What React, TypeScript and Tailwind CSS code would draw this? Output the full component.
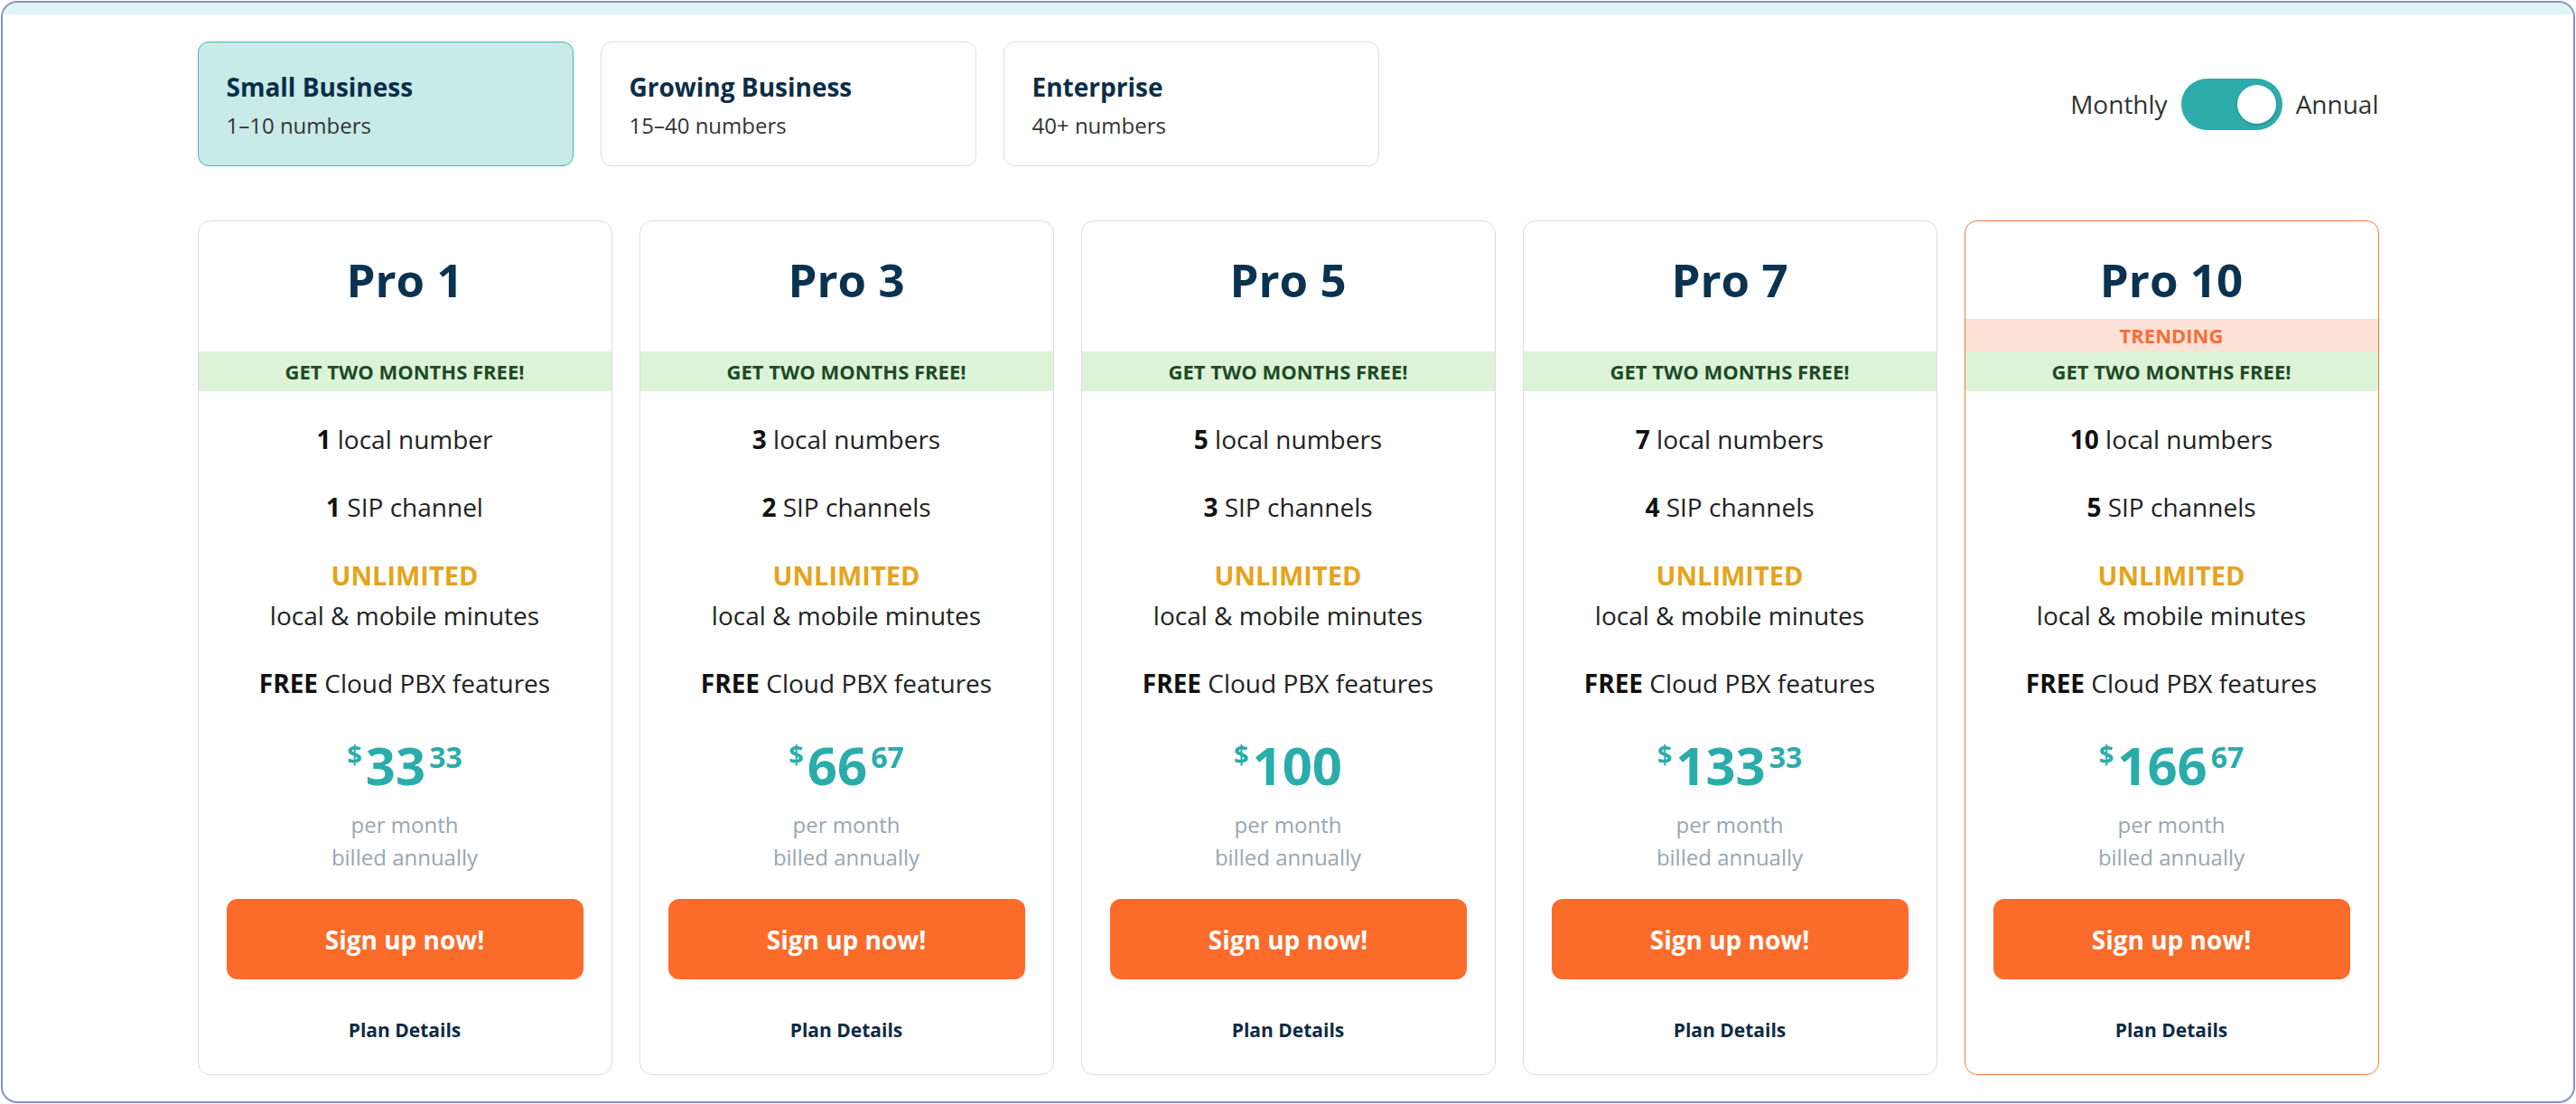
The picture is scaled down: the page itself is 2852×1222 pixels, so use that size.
import React from 'react';

type Plan = {
  name: string;
  numbers: string;
  numberLabel: string;
  channels: string;
  channelLabel: string;
  dollars: string;
  cents?: string;
  trending?: boolean;
};

const plans: Plan[] = [
  { name: 'Pro 1', numbers: '1', numberLabel: 'local number', channels: '1', channelLabel: 'SIP channel', dollars: '33', cents: '33' },
  { name: 'Pro 3', numbers: '3', numberLabel: 'local numbers', channels: '2', channelLabel: 'SIP channels', dollars: '66', cents: '67' },
  { name: 'Pro 5', numbers: '5', numberLabel: 'local numbers', channels: '3', channelLabel: 'SIP channels', dollars: '100' },
  { name: 'Pro 7', numbers: '7', numberLabel: 'local numbers', channels: '4', channelLabel: 'SIP channels', dollars: '133', cents: '33' },
  { name: 'Pro 10', numbers: '10', numberLabel: 'local numbers', channels: '5', channelLabel: 'SIP channels', dollars: '166', cents: '67', trending: true },
];

const tabs = [
  { title: 'Small Business', sub: '1–10 numbers', active: true },
  { title: 'Growing Business', sub: '15–40 numbers' },
  { title: 'Enterprise', sub: '40+ numbers' },
];

function PlanCard({ plan }: { plan: Plan }) {
  return (
    <div
      className={`flex flex-col rounded-[14px] border bg-white ${
        plan.trending ? 'border-[#f47a42]' : 'border-[#dcdcdc]'
      }`}
    >
      <div className="pt-[34px] pb-[14px] text-center text-[51px] font-bold leading-[60px] text-[#0b3350]">
        {plan.name}
      </div>
      {plan.trending ? (
        <div className="flex h-[36px] items-center justify-center bg-[#fde1d6] text-[22px] font-bold text-[#f86d34]">
          TRENDING
        </div>
      ) : (
        <div className="h-[36px]" />
      )}
      <div className="flex h-[44px] items-center justify-center bg-[#dcf3d8] text-[22px] font-bold text-[#1e4a26]">
        GET TWO MONTHS FREE!
      </div>

      <div className="flex flex-col gap-[30px] pt-[31px] text-center text-[28px] leading-[45px] text-[#222222]">
        <div>
          <span className="font-bold text-[#111111]">{plan.numbers}</span> {plan.numberLabel}
        </div>
        <div>
          <span className="font-bold text-[#111111]">{plan.channels}</span> {plan.channelLabel}
        </div>
        <div>
          <div className="text-[29px] font-bold text-[#e6a31a]">UNLIMITED</div>
          <div>local &amp; mobile minutes</div>
        </div>
        <div>
          <span className="font-bold text-[#111111]">FREE</span> Cloud PBX features
        </div>
      </div>

      <div className="mt-[36px] flex h-[64px] items-start justify-center gap-[4px] font-bold text-[#2aacab]">
        <span className="mt-[6px] text-[29px] leading-[28px]">$</span>
        <span className="text-[58px] leading-[64px]">{plan.dollars}</span>
        {plan.cents && <span className="mt-[7px] text-[32px] leading-[32px]">{plan.cents}</span>}
      </div>

      <div className="mt-[16px] text-center text-[24px] leading-[36px] text-[#97a6b3]">
        <div>per month</div>
        <div>billed annually</div>
      </div>

      <button className="mx-[31px] mt-[28px] flex h-[89px] items-center justify-center rounded-[12px] bg-[#fb6c2b] text-[28px] font-bold text-white">
        Sign up now!
      </button>

      <div className="mt-[41px] pb-[34px] text-center text-[21px] font-bold leading-[30px] text-[#0e2a44]">
        Plan Details
      </div>
    </div>
  );
}

export default function App() {
  return (
    <div className="h-[1222px] w-full bg-white p-px" style={{ fontFamily: '"Open Sans", sans-serif' }}>
      <div className="h-full overflow-hidden rounded-[18px] border-2 border-[#8a91c4] bg-white">
        <div className="h-[13px] bg-[#dff4f4]" />

        <div className="mx-auto w-[2415px] pt-[30px]">
          <div className="flex items-center justify-between">
            <div className="flex gap-[30px]">
              {tabs.map((tab) => (
                <div
                  key={tab.title}
                  className={`h-[138px] w-[416px] rounded-[12px] border pl-[31px] pt-[29px] ${
                    tab.active ? 'border-[#3cb5b1] bg-[#c8eae8]' : 'border-[#dedede] bg-white'
                  }`}
                >
                  <div className="text-[28px] font-bold leading-[40px] text-[#0c2d48]">{tab.title}</div>
                  <div className="mt-[3px] text-[24px] leading-[40px] text-[#333333]">{tab.sub}</div>
                </div>
              ))}
            </div>

            <div className="flex items-center gap-[15px] text-[28px] text-[#333333]">
              <span>Monthly</span>
              <div className="flex h-[57px] w-[112px] items-center justify-end rounded-full bg-[#2eabab] pr-[7px]">
                <div className="h-[43px] w-[43px] rounded-full bg-white shadow-[0_1px_3px_rgba(0,0,0,0.25)]" />
              </div>
              <span>Annual</span>
            </div>
          </div>

          <div className="mt-[60px] grid grid-cols-5 gap-[30px]">
            {plans.map((plan) => (
              <PlanCard key={plan.name} plan={plan} />
            ))}
          </div>
        </div>
      </div>
    </div>
  );
}
